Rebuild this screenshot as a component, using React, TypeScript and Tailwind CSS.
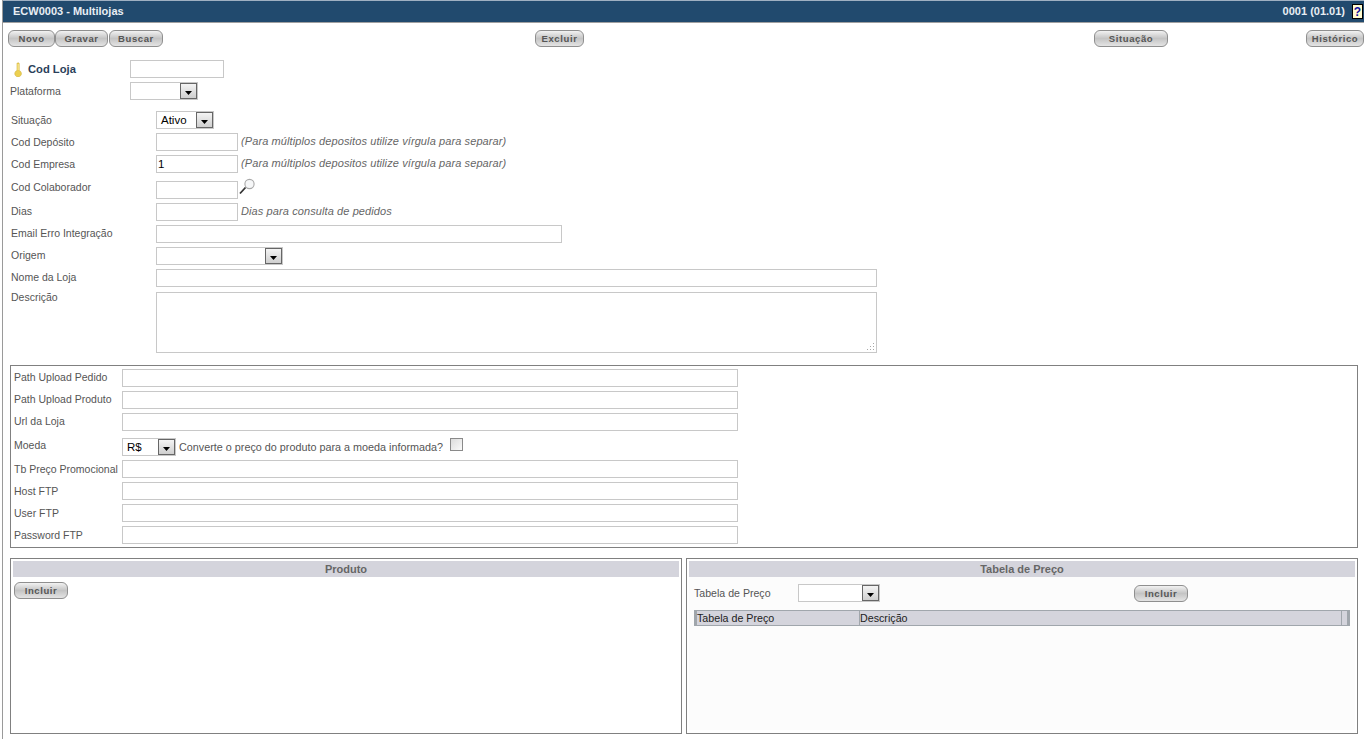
import type { ReactNode } from 'react';

const font = '[font-family:"Liberation_Sans",Arial,sans-serif]';

function Btn({ label, className = '' }: { label: string; className?: string }) {
  return (
    <button className={`h-[17px] shrink-0 rounded-[6px] border border-[#8f8f8f] bg-gradient-to-b from-[#f2f2f2] via-[#c4c4c4] to-[#e4e4e4] text-[9.5px] font-bold leading-[15px] tracking-[0.6px] text-[#555] ${className}`}>
      {label}
    </button>
  );
}

function Input({ w, value = '' }: { w: string; value?: string }) {
  return (
    <div className={`h-[18px] shrink-0 border border-[#c8c8c8] bg-white pl-[1px] text-[11.5px] leading-[16px] text-black ${w}`}>
      {value}
    </div>
  );
}

function Select({ w, value = '' }: { w: string; value?: string }) {
  return (
    <div className={`flex h-[18px] shrink-0 items-center justify-between border border-[#c8c8c8] bg-white pt-[1px] text-[11.5px] text-black ${w}`}>
      <span className="pl-[4px]">{value}</span>
      <span className="-mt-[1px] flex h-[16px] w-[17px] items-center justify-center border border-[#666] bg-gradient-to-b from-[#f4f4f4] to-[#cfcfcf]">
        <svg width="7" height="4" viewBox="0 0 7 4" className="mt-[3px]">
          <path d="M0 0h7L3.5 4z" fill="#000" />
        </svg>
      </span>
    </div>
  );
}

function Row({ label, labelW, top, children }: { label: string; labelW: string; top: string; children: ReactNode }) {
  return (
    <div className={`flex items-start ${top}`}>
      <div className={`shrink-0 whitespace-nowrap text-[10.5px] leading-[15px] text-[#555] ${labelW}`}>{label}</div>
      {children}
    </div>
  );
}

function Hint({ text }: { text: string }) {
  return <span className="ml-[3px] mt-[1px] text-[11px] italic leading-[15px] tracking-[0.1px] text-[#666]">{text}</span>;
}

function Panel({ title, className = '', children }: { title: string; className?: string; children: ReactNode }) {
  return (
    <div className={`h-[176px] w-[672px] border border-[#808080] p-[2px] ${className}`}>
      <div className="h-[16px] bg-[#d4d4dc] text-center text-[11px] font-bold leading-[16px] text-[#666]">{title}</div>
      {children}
    </div>
  );
}

export default function App() {
  const top = 'w-[145px]';
  const box = 'w-[108px]';

  return (
    <div className={`h-[739px] w-[1364px] overflow-hidden bg-white pl-[2px] ${font}`}>
      <div className="h-[739px] border-l border-[#9a9a9a]">
        <div className="flex h-[23px] items-center justify-between border-y border-t-[#9fb0c2] border-b-[#a0a0a0] bg-[#214a6e] pl-[10px] pr-[1px] text-[11px] font-bold text-[#e8eef4]">
          <span>ECW0003 - Multilojas</span>
          <div className="flex items-center gap-[7px]">
            <span>0001 (01.01)</span>
            <span className="flex h-[15px] w-[11px] items-center justify-center border border-black bg-[#fffbd0] text-[12px] font-bold leading-none text-[#1010a0]">?</span>
          </div>
        </div>

        <div className="mt-[7px] flex h-[17px] pl-[5px]">
          <Btn label="Novo" className="w-[47px]" />
          <Btn label="Gravar" className="w-[53px]" />
          <Btn label="Buscar" className="ml-[1px] w-[54px]" />
          <Btn label="Excluir" className="ml-[372px] w-[49px]" />
          <Btn label="Situação" className="ml-[510px] w-[74px]" />
          <Btn label="Histórico" className="ml-[138px] w-[58px]" />
        </div>

        <div className="mt-[13px] flex items-center pl-[7px]">
          <svg width="14" height="15" viewBox="0 0 14 15" className="ml-[1px] shrink-0">
            <path d="M6 1.5a1.2 1.2 0 0 1 2.2 0V8.5a3.3 3.3 0 1 1-2.2 0z" fill="#ecd050" stroke="#d0b040" strokeWidth="0.6" />
            <rect x="6.7" y="2" width="0.8" height="6" fill="#fff6b8" />
          </svg>
          <span className="ml-[3px] w-[102px] text-[11.2px] font-bold text-[#2a3f5a]">Cod Loja</span>
          <Input w="w-[94px]" />
        </div>
        <Row label="Plataforma" labelW="w-[120px] mt-[2px]" top="mt-[4px] pl-[7px]">
          <Select w="w-[68px]" />
        </Row>

        <div className="mt-[11px] flex flex-col pl-[8px]">
          <Row label="Situação" labelW={`${top} mt-[2px]`} top="">
            <Select w="w-[58px]" value="Ativo" />
          </Row>
          <Row label="Cod Depósito" labelW={`${top} mt-[2px]`} top="mt-[4px]">
            <Input w="w-[82px]" />
            <Hint text="(Para múltiplos depositos utilize vírgula para separar)" />
          </Row>
          <Row label="Cod Empresa" labelW={`${top} mt-[2px]`} top="mt-[4px]">
            <Input w="w-[82px]" value="1" />
            <Hint text="(Para múltiplos depositos utilize vírgula para separar)" />
          </Row>
          <Row label="Cod Colaborador" labelW={`${top} -mt-[1px]`} top="mt-[8px]">
            <Input w="w-[82px]" />
            <svg width="18" height="18" viewBox="0 0 18 18" className="-mt-[3px] shrink-0">
              <circle cx="11.5" cy="6" r="4.6" fill="#f6f7f8" stroke="#a8a8a8" strokeWidth="1.1" />
              <path d="M7.5 9.5 2 15.5" stroke="#333" strokeWidth="1.8" />
            </svg>
          </Row>
          <Row label="Dias" labelW={`${top} mt-[1px]`} top="mt-[4px]">
            <Input w="w-[82px]" />
            <Hint text="Dias para consulta de pedidos" />
          </Row>
          <Row label="Email Erro Integração" labelW={`${top} mt-[1px]`} top="mt-[4px]">
            <Input w="w-[406px]" />
          </Row>
          <Row label="Origem" labelW={`${top} mt-[1px]`} top="mt-[4px]">
            <Select w="w-[127px]" />
          </Row>
          <Row label="Nome da Loja" labelW={`${top} mt-[1px]`} top="mt-[4px]">
            <Input w="w-[721px]" />
          </Row>
          <Row label="Descrição" labelW={`${top} -mt-[2px]`} top="mt-[5px]">
            <div className="relative h-[61px] w-[721px] border border-[#c8c8c8] bg-white">
              <svg width="9" height="9" viewBox="0 0 9 9" className="absolute bottom-[1px] right-[1px]">
                <path d="M7 1h1v1H7zM4 4h1v1H4zM7 4h1v1H7zM1 7h1v1H1zM4 7h1v1H4zM7 7h1v1H7z" fill="#a8a8a8" />
              </svg>
            </div>
          </Row>
        </div>

        <div className="ml-[7px] mt-[12px] h-[183px] w-[1348px] border border-[#808080] pl-[3px] pt-[3px]">
          <Row label="Path Upload Pedido" labelW={`${box} mt-[1px]`} top="">
            <Input w="w-[616px]" />
          </Row>
          <Row label="Path Upload Produto" labelW={`${box} mt-[1px]`} top="mt-[4px]">
            <Input w="w-[616px]" />
          </Row>
          <Row label="Url da Loja" labelW={`${box} mt-[1px]`} top="mt-[4px]">
            <Input w="w-[616px]" />
          </Row>
          <Row label="Moeda" labelW={box} top="mt-[7px]">
            <Select w="w-[54px]" value="R$" />
            <span className="ml-[3px] mt-[2px] text-[10.8px] leading-[15px] text-[#555]">Converte o preço do produto para a moeda informada?</span>
            <span className="ml-[7px] h-[13px] w-[13px] border border-[#8a8a8a] bg-gradient-to-br from-[#dcdcdc] to-[#fafafa]" />
          </Row>
          <Row label="Tb Preço Promocional" labelW={`${box} mt-[2px]`} top="mt-[4px]">
            <Input w="w-[616px]" />
          </Row>
          <Row label="Host FTP" labelW={`${box} mt-[2px]`} top="mt-[4px]">
            <Input w="w-[616px]" />
          </Row>
          <Row label="User FTP" labelW={`${box} mt-[2px]`} top="mt-[4px]">
            <Input w="w-[616px]" />
          </Row>
          <Row label="Password FTP" labelW={`${box} mt-[2px]`} top="mt-[4px]">
            <Input w="w-[616px]" />
          </Row>
        </div>

        <div className="ml-[7px] mt-[10px] flex gap-[4px]">
          <Panel title="Produto">
            <Btn label="Incluir" className="ml-[1px] mt-[3px] w-[54px]" />
          </Panel>
          <Panel title="Tabela de Preço">
            <div className="h-[153px] bg-[#fcfcfc]">
              <div className="flex items-center pl-[5px] pt-[7px]">
                <span className="mt-[1px] w-[104px] text-[10.6px] text-[#555]">Tabela de Preço</span>
                <Select w="w-[82px]" />
                <Btn label="Incluir" className="ml-[254px] w-[54px]" />
              </div>
              <div className="ml-[5px] mt-[8px] flex h-[16px] w-[656px] border-y border-[#a0a6ac] bg-[#d4d4dc] text-[10.7px] leading-[14px] text-[#222]">
                <div className="w-[166px] border-l-[3px] border-r border-l-[#a0a6ac] border-r-[#a0a6ac]">Tabela de Preço</div>
                <div className="flex-1">Descrição</div>
                <div className="w-[9px] border-x-[1px] border-[#a0a6ac] border-r-[3px]" />
              </div>
            </div>
          </Panel>
        </div>
      </div>
    </div>
  );
}
